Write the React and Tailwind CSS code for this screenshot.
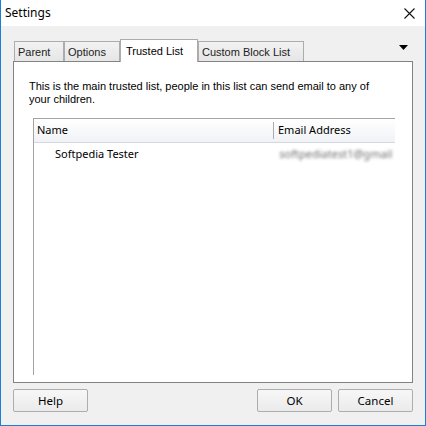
import React from 'react';

const ui = { fontFamily: '"Segoe UI", "Noto Sans", sans-serif' };
const ms = { fontFamily: '"Liberation Sans", Arial, sans-serif' };

const tabs = [
  { label: 'Parent', w: 'w-[50px]' },
  { label: 'Options', w: 'w-[56px]' },
  { label: 'Trusted List', w: 'w-[78px]', active: true },
  { label: 'Custom Block List', w: 'w-[106px]' },
];

const Tab = ({ label, w, active }) => (
  <div
    className={
      active
        ? `${w} h-[23px] -mb-px z-10 border border-b-0 border-[#acacac] bg-white pl-[5px] pt-[3px] text-[11px] text-black`
        : `${w} h-[20px] border border-b-0 border-[#acacac] bg-gradient-to-b from-[#f2f2f2] to-[#e6e6e6] pl-[3px] pt-[2px] text-[11px] text-[#222]`
    }
    style={ms}
  >
    {label}
  </div>
);

const Button = ({ children }) => (
  <button
    className="w-[75px] h-[23px] rounded-[2px] border border-[#adadad] bg-gradient-to-b from-[#f7f7f7] to-[#ebebeb] text-[11.5px] leading-[21px] text-black"
    style={ui}
  >
    {children}
  </button>
);

export default function App() {
  return (
    <div className="w-[426px] h-[426px] flex flex-col bg-[#f0f0f0] border-x border-b border-[#1a80d5]">
      <div className="h-[26px] shrink-0 bg-white flex items-center justify-between pl-[4px] pr-[10px]">
        <span className="text-[12px] text-black" style={ui}>Settings</span>
        <svg width="11" height="11" viewBox="0 0 11 11">
          <path d="M0.5 0.5 L10.5 10.5 M10.5 0.5 L0.5 10.5" stroke="#111" strokeWidth="1.1" />
        </svg>
      </div>

      <div className="flex flex-col px-[12px]">
        <div className="mt-[12px] h-[23px] flex items-end pl-px">
          {tabs.map((t) => (
            <Tab key={t.label} {...t} />
          ))}
          <div className="ml-auto self-start mt-[7px] mr-[5px]">
            <svg width="9" height="5" viewBox="0 0 9 5">
              <path d="M0 0 H9 L4.5 5 Z" fill="#000" />
            </svg>
          </div>
        </div>

        <div className="h-[322px] border border-[#838383] bg-white flex flex-col">
          <div className="pl-[15px] pt-[18px] text-[11px] leading-[13px] text-black" style={ms}>
            <p>This is the main trusted list, people in this list can send email to any of</p>
            <p>your children.</p>
          </div>

          <div className="ml-[19px] mt-[12px] w-[362px] h-[257px] border-l border-t border-[#a3a3a3] flex flex-col">
            <div className="h-[24px] flex items-center bg-gradient-to-b from-white to-[#f0f2f6] border-b border-[#d5d8de] text-[11px] text-black" style={ui}>
              <div className="w-[239px] pl-[3px]">Name</div>
              <div className="w-px h-[17px] bg-[#a8acb2]" />
              <div className="pl-[4px]">Email Address</div>
            </div>
            <div className="h-[22px] flex items-center text-[11px] text-black" style={ui}>
              <div className="w-[240px] pl-[21px]">Softpedia Tester</div>
              <div className="pl-[6px] text-[11px] text-[#6e6e6e] blur-[1.4px] whitespace-nowrap overflow-hidden w-[122px]">
                softpediatest1@gmail
              </div>
            </div>
          </div>
        </div>

        <div className="mt-[6px] flex">
          <Button>Help</Button>
          <div className="ml-auto flex gap-[6px]">
            <Button>OK</Button>
            <Button>Cancel</Button>
          </div>
        </div>
      </div>
    </div>
  );
}
